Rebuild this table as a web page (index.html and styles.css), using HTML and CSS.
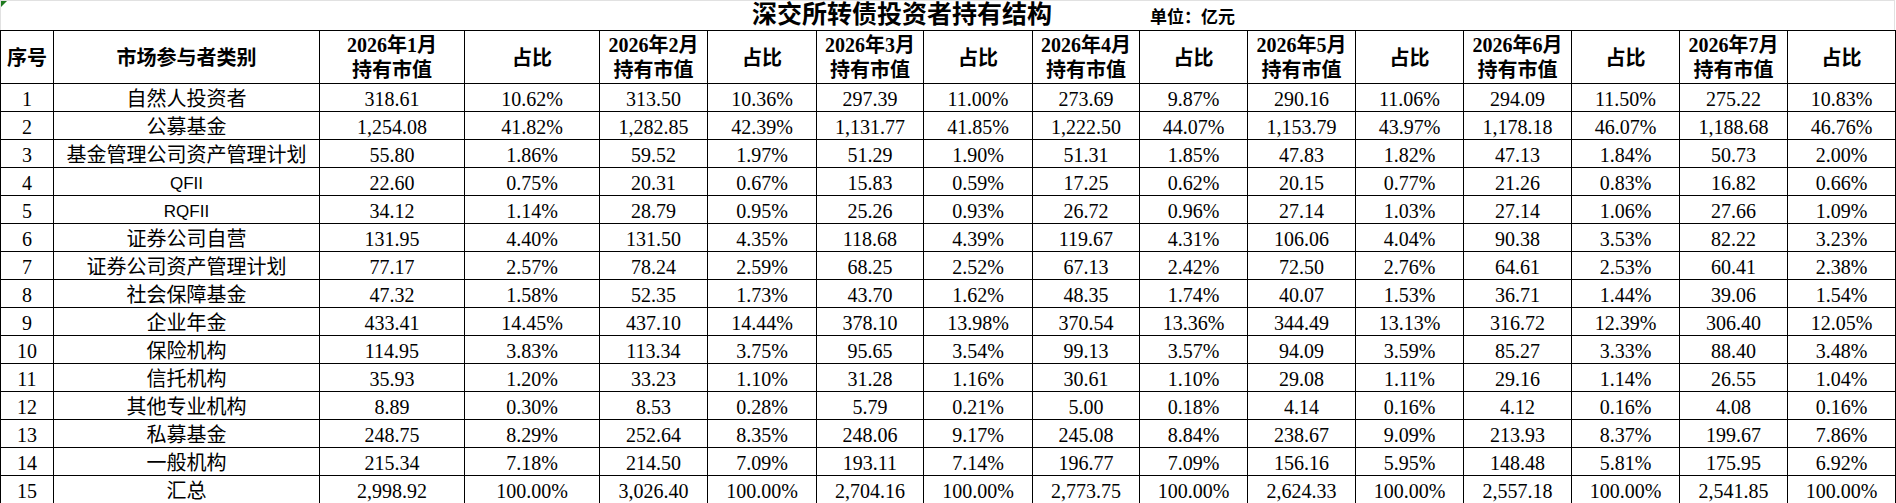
FILE: index.html
```html
<!DOCTYPE html>
<html lang="zh-CN">
<head>
<meta charset="utf-8">
<title>深交所转债投资者持有结构</title>
<link rel="stylesheet" href="styles.css">
</head>
<body>
<div class="sheet">
  <div class="titlebar">
    <span class="flag"></span>
    <h1 class="title">深交所转债投资者持有结构</h1>
    <span class="unit">单位：亿元</span>
  </div>
  <table class="grid">
    <colgroup>
      <col class="c-idx"><col class="c-cat"><col class="c-v1"><col class="c-p1">
      <col class="c-108"><col class="c-109"><col class="c-107"><col class="c-109">
      <col class="c-107"><col class="c-108"><col class="c-108"><col class="c-108">
      <col class="c-108"><col class="c-108"><col class="c-108"><col class="c-108">
    </colgroup>
    <thead>
      <tr>
        <th>序号</th><th>市场参与者类别</th>
        <th>2026年1月<br>持有市值</th><th>占比</th>
        <th>2026年2月<br>持有市值</th><th>占比</th>
        <th>2026年3月<br>持有市值</th><th>占比</th>
        <th>2026年4月<br>持有市值</th><th>占比</th>
        <th>2026年5月<br>持有市值</th><th>占比</th>
        <th>2026年6月<br>持有市值</th><th>占比</th>
        <th>2026年7月<br>持有市值</th><th>占比</th>
      </tr>
    </thead>
    <tbody>
      <tr><td>1</td><td>自然人投资者</td><td>318.61</td><td>10.62%</td><td>313.50</td><td>10.36%</td><td>297.39</td><td>11.00%</td><td>273.69</td><td>9.87%</td><td>290.16</td><td>11.06%</td><td>294.09</td><td>11.50%</td><td>275.22</td><td>10.83%</td></tr>
      <tr><td>2</td><td>公募基金</td><td>1,254.08</td><td>41.82%</td><td>1,282.85</td><td>42.39%</td><td>1,131.77</td><td>41.85%</td><td>1,222.50</td><td>44.07%</td><td>1,153.79</td><td>43.97%</td><td>1,178.18</td><td>46.07%</td><td>1,188.68</td><td>46.76%</td></tr>
      <tr><td>3</td><td>基金管理公司资产管理计划</td><td>55.80</td><td>1.86%</td><td>59.52</td><td>1.97%</td><td>51.29</td><td>1.90%</td><td>51.31</td><td>1.85%</td><td>47.83</td><td>1.82%</td><td>47.13</td><td>1.84%</td><td>50.73</td><td>2.00%</td></tr>
      <tr><td>4</td><td class="latin">QFII</td><td>22.60</td><td>0.75%</td><td>20.31</td><td>0.67%</td><td>15.83</td><td>0.59%</td><td>17.25</td><td>0.62%</td><td>20.15</td><td>0.77%</td><td>21.26</td><td>0.83%</td><td>16.82</td><td>0.66%</td></tr>
      <tr><td>5</td><td class="latin">RQFII</td><td>34.12</td><td>1.14%</td><td>28.79</td><td>0.95%</td><td>25.26</td><td>0.93%</td><td>26.72</td><td>0.96%</td><td>27.14</td><td>1.03%</td><td>27.14</td><td>1.06%</td><td>27.66</td><td>1.09%</td></tr>
      <tr><td>6</td><td>证券公司自营</td><td>131.95</td><td>4.40%</td><td>131.50</td><td>4.35%</td><td>118.68</td><td>4.39%</td><td>119.67</td><td>4.31%</td><td>106.06</td><td>4.04%</td><td>90.38</td><td>3.53%</td><td>82.22</td><td>3.23%</td></tr>
      <tr><td>7</td><td>证券公司资产管理计划</td><td>77.17</td><td>2.57%</td><td>78.24</td><td>2.59%</td><td>68.25</td><td>2.52%</td><td>67.13</td><td>2.42%</td><td>72.50</td><td>2.76%</td><td>64.61</td><td>2.53%</td><td>60.41</td><td>2.38%</td></tr>
      <tr><td>8</td><td>社会保障基金</td><td>47.32</td><td>1.58%</td><td>52.35</td><td>1.73%</td><td>43.70</td><td>1.62%</td><td>48.35</td><td>1.74%</td><td>40.07</td><td>1.53%</td><td>36.71</td><td>1.44%</td><td>39.06</td><td>1.54%</td></tr>
      <tr><td>9</td><td>企业年金</td><td>433.41</td><td>14.45%</td><td>437.10</td><td>14.44%</td><td>378.10</td><td>13.98%</td><td>370.54</td><td>13.36%</td><td>344.49</td><td>13.13%</td><td>316.72</td><td>12.39%</td><td>306.40</td><td>12.05%</td></tr>
      <tr><td>10</td><td>保险机构</td><td>114.95</td><td>3.83%</td><td>113.34</td><td>3.75%</td><td>95.65</td><td>3.54%</td><td>99.13</td><td>3.57%</td><td>94.09</td><td>3.59%</td><td>85.27</td><td>3.33%</td><td>88.40</td><td>3.48%</td></tr>
      <tr><td>11</td><td>信托机构</td><td>35.93</td><td>1.20%</td><td>33.23</td><td>1.10%</td><td>31.28</td><td>1.16%</td><td>30.61</td><td>1.10%</td><td>29.08</td><td>1.11%</td><td>29.16</td><td>1.14%</td><td>26.55</td><td>1.04%</td></tr>
      <tr><td>12</td><td>其他专业机构</td><td>8.89</td><td>0.30%</td><td>8.53</td><td>0.28%</td><td>5.79</td><td>0.21%</td><td>5.00</td><td>0.18%</td><td>4.14</td><td>0.16%</td><td>4.12</td><td>0.16%</td><td>4.08</td><td>0.16%</td></tr>
      <tr><td>13</td><td>私募基金</td><td>248.75</td><td>8.29%</td><td>252.64</td><td>8.35%</td><td>248.06</td><td>9.17%</td><td>245.08</td><td>8.84%</td><td>238.67</td><td>9.09%</td><td>213.93</td><td>8.37%</td><td>199.67</td><td>7.86%</td></tr>
      <tr><td>14</td><td>一般机构</td><td>215.34</td><td>7.18%</td><td>214.50</td><td>7.09%</td><td>193.11</td><td>7.14%</td><td>196.77</td><td>7.09%</td><td>156.16</td><td>5.95%</td><td>148.48</td><td>5.81%</td><td>175.95</td><td>6.92%</td></tr>
      <tr><td>15</td><td>汇总</td><td>2,998.92</td><td>100.00%</td><td>3,026.40</td><td>100.00%</td><td>2,704.16</td><td>100.00%</td><td>2,773.75</td><td>100.00%</td><td>2,624.33</td><td>100.00%</td><td>2,557.18</td><td>100.00%</td><td>2,541.85</td><td>100.00%</td></tr>
    </tbody>
  </table>
</div>
</body>
</html>
```

FILE: styles.css
```css
html, body {
  margin: 0;
  padding: 0;
  background: #ffffff;
}

body {
  font-family: "Liberation Serif", "Noto Sans CJK SC", serif;
  color: #000000;
}

.sheet {
  width: 1896px;
}

.titlebar {
  position: relative;
  box-sizing: border-box;
  width: 1895px;
  height: 30px;
  border-top: 1px solid #e1e1e1;
  border-left: 1px solid #e1e1e1;
  border-right: 1px solid #e1e1e1;
  display: flex;
  align-items: baseline;
  padding-left: 751px;
}

.flag {
  position: absolute;
  top: 0;
  left: 0;
  width: 0;
  height: 0;
  border-top: 6px solid #1f7a1f;
  border-right: 6px solid transparent;
}

.title {
  margin: 0;
  font-size: 25px;
  font-weight: bold;
  line-height: 28px;
}

.unit {
  margin-left: 98px;
  font-size: 17px;
  font-weight: bold;
  line-height: 28px;
}

.grid {
  table-layout: fixed;
  border-collapse: collapse;
  width: 1896px;
}

.c-idx { width: 53px; }
.c-cat { width: 266px; }
.c-v1 { width: 145px; }
.c-p1 { width: 135px; }
.c-107 { width: 107px; }
.c-108 { width: 108px; }
.c-109 { width: 109px; }

.grid th,
.grid td {
  border: 1px solid #000000;
  text-align: center;
  white-space: nowrap;
  overflow: hidden;
}

.grid th {
  height: 49px;
  padding: 2px 0 0;
  font-size: 20px;
  font-weight: bold;
  line-height: 25px;
  vertical-align: middle;
}

.grid td {
  height: 23px;
  padding: 4px 0 0;
  font-size: 20px;
  font-weight: normal;
  line-height: 23px;
  vertical-align: top;
}

.grid td.latin {
  font-family: "Liberation Sans", sans-serif;
  font-size: 17px;
}
```
